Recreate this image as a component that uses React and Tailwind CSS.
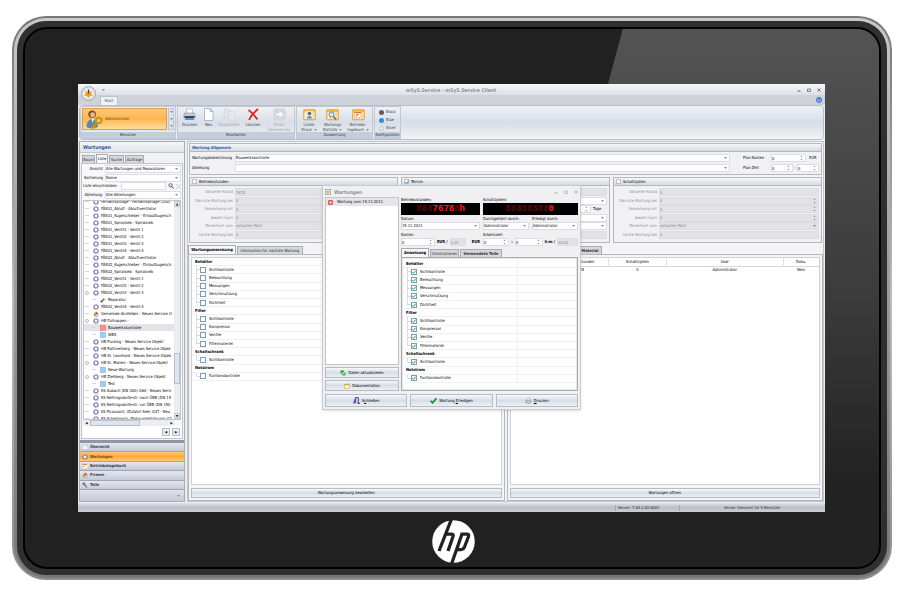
import { Fragment } from 'react';

const PANEL = 'border border-[#b4b7bd] bg-[#f1f1f4]';
const FIELD = 'border border-[#dcdde2] rounded-none';
const BUTTON =
  'flex items-center justify-center gap-[2px] border border-[#b3bcc8] bg-linear-to-b from-[#f7f9fb] via-[#d5dde6] to-[#edf1f5]';

const TREE = [
  { label: 'Fernwirkanlage - Fernwirkanlage (200)', icon: 'ring' },
  { label: 'FÄKU1_Abluft - Abluftventilator', icon: 'ring' },
  { label: 'FÄKU1_Kugelschieber - Einlaufkugelsch', icon: 'ring' },
  { label: 'FÄKU1_Spiralsieb - Spiralsieb', icon: 'ring' },
  { label: 'FÄKU1_Ventil1 - Ventil 1', icon: 'ring' },
  { label: 'FÄKU1_Ventil2 - Ventil 2', icon: 'ring' },
  { label: 'FÄKU1_Ventil3 - Ventil 3', icon: 'ring' },
  { label: 'FÄKU1_Ventil4 - Ventil 4', icon: 'ring' },
  { label: 'FÄKU2_Abluft - Abluftventilator', icon: 'ring' },
  { label: 'FÄKU2_Kugelschieber - Einlaufkugelsch', icon: 'ring' },
  { label: 'FÄKU2_Spiralsieb - Spiralsieb', icon: 'ring' },
  { label: 'FÄKU2_Ventil1 - Ventil 1', icon: 'ring' },
  { label: 'FÄKU2_Ventil2 - Ventil 2', icon: 'ring' },
  { label: 'FÄKU2_Ventil3 - Ventil 3', icon: 'ring', open: true },
  { label: 'Reparatur', icon: 'tool', child: true },
  { label: 'FÄKU2_Ventil4 - Ventil 4', icon: 'ring' },
  { label: 'Gemeinde Ansfelden - Neues Service O', icon: 'house' },
  { label: 'HB Fürhappen -', icon: 'ring', open: true },
  { label: 'Bauwerkskontrolle', icon: 'red', child: true, active: true },
  { label: 'WBS', icon: 'blue', child: true },
  { label: 'HB Pucking - Neues Service Objekt', icon: 'ring' },
  { label: 'HB Rathnerberg - Neues Service Objek', icon: 'ring' },
  { label: 'HB St. Leonhard - Neues Service Objek', icon: 'ring' },
  { label: 'HB St. Marien - Neues Service Objekt', icon: 'ring', open: true },
  { label: 'Neue Wartung', icon: 'blue', child: true },
  { label: 'HB Ziehberg - Neues Service Objekt', icon: 'ring', open: true },
  { label: 'Test', icon: 'blue', child: true },
  { label: 'KS Aubach (DN 300) G60 - Neues Servi', icon: 'ring' },
  { label: 'KS Nettingsdorferstr. nach ÖBB (DN 15', icon: 'ring' },
  { label: 'KS Nettingsdorferstr. vor ÖBB (DN 150', icon: 'ring' },
  { label: 'KS Picassostr. (Zufahrt See) G47 - Neu', icon: 'ring' },
  { label: 'KS Schellingstr. (Bahnunterführung) G2', icon: 'ring' },
];

const CHECKS = [
  ['Behälter', ['Sichtkontrolle', 'Beleuchtung', 'Messungen', 'Verschmutzung', 'Dichtheit']],
  ['Filter', ['Sichtkontrolle', 'Kompressor', 'Ventile', 'Filtermateriel']],
  ['Schaltschrank', ['Sichtkontrolle']],
  ['Notstrom', ['Funtionskontrolle']],
];

const NAV = [
  ['Übersicht', 'list'],
  ['Wartungen', 'ring'],
  ['Betriebstagebuch', 'book'],
  ['Firmen', 'house'],
  ['Teile', 'wrench'],
];

function SmallIcon({ name, className = 'size-[6px]' }) {
  const shapes = {
    ring: (
      <>
        <circle cx="6" cy="6" r="4" fill="#fff" stroke="#7c7cc4" strokeWidth="2.4" />
        <circle cx="6" cy="6" r="5.4" fill="none" stroke="#6a6ab0" strokeWidth="1" strokeDasharray="2 2.2" />
      </>
    ),
    tool: (
      <>
        <path d="M2 10 L7 5" stroke="#5b3a36" strokeWidth="2.4" />
        <path d="M7 2 L10 5 L8 6 L6 4z" fill="#d33b2c" />
        <path d="M1 9 L3 11" stroke="#d33b2c" strokeWidth="2" />
      </>
    ),
    house: (
      <>
        <path d="M1 6 L6 1 L9 4 L6 11 L2 10z" fill="#ef8a2e" />
        <path d="M6 1 L11 6 L9 6 L6 4z" fill="#b5431f" />
        <path d="M5 7h5v4H5z" fill="#dfe8f3" stroke="#6f92bd" />
      </>
    ),
    red: <rect x="1" y="1" width="10" height="10" fill="#ff8d8d" stroke="#e35d5d" />,
    blue: <rect x="1" y="1" width="10" height="10" fill="#9fcbf5" stroke="#6aa5dd" />,
    redbox: <rect x="2" y="2" width="8" height="8" fill="#fff" stroke="#e81e25" strokeWidth="2.6" />,
    list: (
      <>
        <rect x="0.5" y="2" width="11" height="9" fill="#fff" stroke="#aab6c8" />
        <path d="M1 4h10M5 4v7" stroke="#b9cbe4" />
      </>
    ),
    book: (
      <>
        <rect x="1" y="1" width="10" height="10" fill="#fff" stroke="#d6cdc0" />
        <path d="M1 3h9" stroke="#ef8434" strokeWidth="2.5" />
        <path d="M3 7h3" stroke="#db5a3d" strokeWidth="1.5" />
      </>
    ),
    wrench: (
      <>
        <path d="M3 3 L10 11" stroke="#545b66" strokeWidth="2.2" />
        <circle cx="3.5" cy="3.5" r="2.2" fill="none" stroke="#545b66" strokeWidth="1.5" />
      </>
    ),
    search: (
      <>
        <circle cx="5" cy="4.5" r="3.3" fill="#dfe6ee" stroke="#3f4650" strokeWidth="1.5" />
        <path d="M7.5 7 L11 11" stroke="#2f3540" strokeWidth="2" />
      </>
    ),
    clear: <path d="M1 3V1h2M9 1h2v2M11 9v2H9M3 11H1V9M3 3l6 6M9 3l-6 6" fill="none" stroke="#848b96" />,
    refresh: (
      <>
        <path d="M1 1h7v3H5v3H1z" fill="#28a52c" />
        <path d="M11 11H4V8h3V5h4z" fill="#48c24a" />
      </>
    ),
    folder: (
      <>
        <rect x="1" y="3" width="10" height="8" fill="#fff6d2" stroke="#c9a442" />
        <path d="M1 3h7" stroke="#e0a51c" strokeWidth="2.5" />
        <path d="M9 1v4" stroke="#3a6db7" />
      </>
    ),
    door: (
      <>
        <path d="M4 11V1h5v10" fill="#c9d9ef" stroke="#273d8c" strokeWidth="1.6" />
        <path d="M1 11l3-7M8 11h4" stroke="#7a2fa0" strokeWidth="2" />
      </>
    ),
    tick: <path d="M1 6.5 L4.5 10 L11 2" fill="none" stroke="#12832a" strokeWidth="2.6" />,
    printer: (
      <>
        <path d="M3 5 L5 1 L9 2 L8 6" fill="#fff" stroke="#98a4b3" />
        <path d="M1 6l8-1 2 3-3 3-6-1z" fill="#c3cad4" stroke="#7d8894" />
      </>
    ),
    app: (
      <>
        <rect x="0.5" y="0.5" width="11" height="11" fill="#e8f0fa" stroke="#5e86b8" />
        <path d="M6 2l1.4 2.6L10 5 8 7l.4 3L6 8.6l-2.4 1.4L4 7 2 5l2.6-.4z" fill="#f0a21c" />
      </>
    ),
  };
  return (
    <svg viewBox="0 0 12 12" className={`shrink-0 ${className}`} aria-hidden="true">
      {shapes[name]}
    </svg>
  );
}

function RibbonIcon({ name }) {
  const table = (
    <>
      <rect x="1" y="3" width="24" height="21" rx="2" fill="#f6b846" stroke="#d99523" />
      <path d="M3 8h20v14H3z" fill="#fff3cf" />
      <path d="M9 8v14M15 8v14M20 8v14" stroke="#f0b54c" strokeWidth="1.5" />
    </>
  );
  const shapes = {
    print: (
      <>
        <path d="M7 2h12v9H7z" fill="#fff" stroke="#8b99ad" />
        <path d="M3 10h20l2 9H1z" fill="#c4ccd8" stroke="#77849a" />
        <path d="M3 16h20v4H3z" fill="#3c4350" />
        <path d="M5 20h16l2 4H3z" fill="#4a9be8" />
      </>
    ),
    page: (
      <>
        <path d="M5 1h11l6 6v18H5z" fill="#fff" stroke="#8ea0bd" strokeWidth="1.4" />
        <path d="M16 1v6h6z" fill="#b9cdea" stroke="#8ea0bd" />
      </>
    ),
    copy: (
      <>
        <path d="M2 2h9l3 3v14H2z" fill="#e3e6ea" stroke="#c2c7ce" />
        <path d="M11 7h9l4 4v13H11z" fill="#e9ebee" stroke="#c2c7ce" />
        <path d="M13 14h8M13 18h8" stroke="#c9cdd3" />
      </>
    ),
    del: <path d="M3 4c6 4 13 12 18 19M22 2C15 8 8 15 4 24" fill="none" stroke="#db2a1c" strokeWidth="3.6" />,
    arrow: (
      <>
        <rect x="1" y="1" width="24" height="24" rx="3" fill="#d3d6da" />
        <path d="M6 11h7V6l8 7-8 7v-5H6z" fill="#f7f8f9" />
      </>
    ),
    user: (
      <>
        {table}
        <path d="M6 6h14v15H6z" fill="#d8ebfb" />
        <circle cx="13" cy="11" r="3.5" fill="#8a5a2c" />
        <path d="M8 21c0-7 10-7 10 0z" fill="#4d93d8" />
      </>
    ),
    stat: (
      <>
        {table}
        <circle cx="11" cy="13" r="5" fill="#cfe6f7" stroke="#5c7f9e" strokeWidth="1.8" />
        <path d="M15 17l5 6" stroke="#5b6470" strokeWidth="2.5" />
      </>
    ),
    diary: (
      <>
        {table}
        <rect x="5" y="7" width="13" height="12" fill="#fff" stroke="#d2a184" />
        <path d="M5 9h13M8 16l5-4" stroke="#ea6a35" strokeWidth="2.5" />
      </>
    ),
  };
  return (
    <svg viewBox="0 0 26 26" className="size-[13px] shrink-0" aria-hidden="true">
      {shapes[name]}
    </svg>
  );
}

function RibbonButton({ icon, lines, width, muted, menu }) {
  return (
    <button className={`flex flex-col items-center leading-[5px] ${width} ${muted ? 'text-[#a0a5ae]' : 'text-[#353d4b]'}`}>
      <RibbonIcon name={icon} />
      <span className="mt-px whitespace-nowrap">
        {lines.map((line, i) => (
          <span key={line} className="flex items-center justify-center gap-[2px]">
            {line}
            {menu && i === lines.length - 1 && <Caret />}
          </span>
        ))}
      </span>
    </button>
  );
}

function RibbonGroup({ title, width, children }) {
  return (
    <section
      className={`flex flex-col border border-[#c3c9d3] bg-linear-to-b from-[#eff1f5] via-[#d9dee8] to-[#eceff3] ${width}`}
    >
      <div className="flex min-h-0 flex-1 justify-center pt-px">{children}</div>
      <h3 className="h-[6px] bg-[#c5ccdb] text-center whitespace-nowrap text-[#2c3648]">{title}</h3>
    </section>
  );
}

function Arrows() {
  return (
    <svg viewBox="0 0 6 12" className="h-[6px] w-[3px] shrink-0" aria-hidden="true">
      <path d="M1 4l2-3 2 3zM1 8l2 3 2-3z" fill="#8b9098" />
    </svg>
  );
}

function Caret() {
  return (
    <svg viewBox="0 0 6 4" className="h-[2px] w-[3px] shrink-0" aria-hidden="true">
      <path d="M0 0h6L3 4z" fill="#8b9098" />
    </svg>
  );
}

function Field({ id, label, value = '', kind = 'text', off, className = 'flex-1' }) {
  const tone = off ? 'bg-[#e1e1e6] text-[#8f9097]' : 'bg-white';
  return (
    <span className={`flex h-[8px] min-w-0 items-center pr-[2px] ${FIELD} ${tone} ${className}`}>
      {kind === 'select' ? (
        <select id={id} aria-label={label} disabled={off} className="h-full min-w-0 flex-1 appearance-none opacity-100">
          <option>{value}</option>
        </select>
      ) : (
        <input id={id} aria-label={label} disabled={off} defaultValue={value} className="h-full w-0 min-w-0 flex-1" />
      )}
      {kind === 'select' && <Caret />}
      {kind === 'spin' && <Arrows />}
    </span>
  );
}

function TabBar({ tabs, active }) {
  return (
    <div role="tablist" className="flex items-end gap-px">
      {tabs.map(([name, width, bold]) => (
        <button
          key={name}
          role="tab"
          aria-selected={name === active}
          className={`border border-b-0 border-[#a8abb2] whitespace-nowrap ${width} ${
            name === active ? 'h-[9px] bg-[#f8f8fa] leading-[8px]' : 'h-[8px] bg-[#d6d7dc] leading-[7px] text-[#2b2d33]'
          } ${bold ? 'font-bold' : ''}`}
        >
          {name}
        </button>
      ))}
    </div>
  );
}

function CheckTree({ prefix, checked, split }) {
  return (
    <div className="flex h-[123px] flex-col">
      {CHECKS.map(([group, items]) => (
        <Fragment key={group}>
          <div className="flex flex-1 items-center border-b border-[#f1f1f4]">
            <h4 className={`flex items-center self-stretch pl-[3px] font-bold ${split ? 'w-[115px] border-r border-[#f1f1f4]' : ''}`}>
              {group}
            </h4>
          </div>
          {items.map((item, i) => (
            <div key={item} className="flex flex-1 items-center border-b border-[#f1f1f4]">
              <div className={`flex items-center self-stretch pl-[4px] ${split ? 'w-[115px] border-r border-[#f1f1f4]' : ''}`}>
                <span className={`w-px bg-[#d5d7dc] ${i === items.length - 1 ? 'h-1/2 self-start' : 'self-stretch'}`} />
                <span className="h-px w-[3px] bg-[#d5d7dc]" />
                <input
                  type="checkbox"
                  id={`${prefix}-${group}-${i}`}
                  defaultChecked={checked}
                  className="size-[6px] appearance-none border border-[#7b9dbf] bg-white"
                />
                {checked && (
                  <span className="pointer-events-none -ml-[5px] flex w-[5px]">
                    <SmallIcon name="tick" className="size-[4px]" />
                  </span>
                )}
                <label htmlFor={`${prefix}-${group}-${i}`} className="pl-[3px]">
                  {item}
                </label>
              </div>
            </div>
          ))}
        </Fragment>
      ))}
    </div>
  );
}

function Counter({ id, title, rows, checked }) {
  return (
    <fieldset className={`flex min-w-0 flex-1 flex-col ${PANEL}`}>
      <div className="flex h-[8px] items-center gap-[2px] border-b border-[#b4b7bd] bg-linear-to-b from-[#f5f6f8] to-[#d5dce4] pl-[2px]">
        <input
          type="checkbox"
          id={id}
          defaultChecked={checked}
          className="peer size-[5px] appearance-none border border-[#b9bec8] bg-white"
        />
        {checked && (
          <span className="pointer-events-none -ml-[6px] flex w-[4px]">
            <svg viewBox="0 0 12 12" className="size-[4px]" aria-hidden="true">
              <path d="M1 6.5 L4.500 10 L11 2" fill="none" stroke="#2f6fb8" strokeWidth="2.6" />
            </svg>
          </span>
        )}
        <label htmlFor={id}>{title}</label>
      </div>
      <div className="flex flex-1 flex-col justify-between pt-[2px] pr-[2px] pb-[3px]">
        {rows.map(([label, value, kind, on, unit]) => (
          <div key={label} className="flex items-center">
            <label htmlFor={`${id}-${label}`} className={`w-[43px] shrink-0 text-right whitespace-nowrap ${on ? '' : 'text-[#8f9097]'}`}>
              {label}
            </label>
            <Field id={`${id}-${label}`} value={value} kind={kind} off={!on} className="ml-[2px] flex-1" />
            {unit && <span className="w-[16px] pl-[2px]">{unit}</span>}
          </div>
        ))}
      </div>
    </fieldset>
  );
}

const counterRows = (state) => [
  ['Aktueller Stand', state],
  ['Nächste Wartung bei', '0', 'spin'],
  ['Vorwarnung mit', '0', 'spin'],
  ['Jeweils nach', '0', 'spin'],
  ['Berechnet vom', 'aktuellen Wert', 'select'],
  ['Letzte Wartung bei', '0'],
];

const TERMIN_ROWS = [
  ['Aktueller Stand', ''],
  ['Nächste Wartung am', '', 'select', true],
  ['Vorwarnung mit', '', 'spin', true, 'Tage'],
  ['Jeweils nach', '', 'select', true],
  ['Berechnet vom', '', 'select', true],
  ['Letzte Wartung am', ''],
];

// parts: [text, lit] pairs, left to right
function Led({ parts, className }) {
  return (
    <output
      className={`flex h-[12px] items-center justify-end bg-black font-['Liberation_Mono',monospace] text-[9px] leading-[10px] font-bold whitespace-pre ${className}`}
    >
      {parts.map(([text, lit], i) => (
        <span key={i} className={lit ? 'text-[#ff1a14]' : 'text-[#5a0b09]'}>
          {text}
        </span>
      ))}
    </output>
  );
}

function WindowButtons({ className }) {
  return (
    <div className={`flex items-center ${className}`}>
      <button aria-label="Minimieren">
        <svg viewBox="0 0 8 8" className="size-[4px]">
          <path d="M1 6h6" stroke="currentColor" strokeWidth="2" />
        </svg>
      </button>
      <button aria-label="Maximieren">
        <svg viewBox="0 0 8 8" className="size-[4px]">
          <path d="M1 2h6v5H1z" fill="none" stroke="currentColor" strokeWidth="1.5" />
        </svg>
      </button>
      <button aria-label="Fenster zu">
        <svg viewBox="0 0 8 8" className="size-[4px]">
          <path d="M1 1l6 6M7 1L1 7" stroke="currentColor" strokeWidth="1.8" />
        </svg>
      </button>
    </div>
  );
}

function Dialog() {
  return (
    <div
      role="dialog"
      aria-label="Wartungen"
      className="absolute top-[101px] left-[244px] flex h-[225px] w-[259px] flex-col border border-[#c9cbd0] bg-[#f0f0f3] px-[2px] pb-[2px] shadow-sm"
    >
      <header className="flex h-[11px] items-center gap-[3px] text-[#8d9097]">
        <SmallIcon name="app" />
        <h2 className="flex-1 text-[5px] leading-[8px] font-bold">Wartungen</h2>
        <WindowButtons className="gap-[6px] text-[#a9adb4]" />
      </header>
      <div className="flex min-h-0 flex-1 gap-[2px]">
        <div className="flex w-[74px] flex-col gap-[2px]">
          <ul className="flex-1 border border-[#c3c5ca] bg-white">
            <li className="flex h-[8px] items-center gap-[4px] bg-[#e6e6ea] pl-[2px]">
              <SmallIcon name="redbox" className="size-[5px]" />
              Wartung vom 15.11.2011
            </li>
          </ul>
          <button className={`h-[11px] ${BUTTON}`}>
            <SmallIcon name="refresh" />
            Daten aktualisieren
          </button>
          <button className={`h-[11px] ${BUTTON}`}>
            <SmallIcon name="folder" />
            Dokumentation
          </button>
        </div>

        <div className="flex min-w-0 flex-1 flex-col">
          <div className="flex gap-[3px]">
            <div className="w-[79px]">
              <p>Betriebsstunden:</p>
              <Led parts={[['888'], ['7678', true], ['8'], ['h', true]]} className="pr-[15px]" />
            </div>
            <div className="flex-1">
              <p>Schaltzyklen:</p>
              <Led parts={[['88888888'], ['0', true]]} className="pr-[24px]" />
            </div>
          </div>
          <div className="mt-px flex gap-[3px]">
            <div className="w-[79px]">
              <label htmlFor="datum" className="block">Datum:</label>
              <Field id="datum" value="15.11.2011" kind="select" className="" />
            </div>
            <div className="min-w-0 flex-1">
              <label htmlFor="durch" className="block">Durchgeführt durch:</label>
              <Field id="durch" value="Administrator" kind="select" className="" />
            </div>
            <div className="min-w-0 flex-1">
              <label htmlFor="erledigt" className="block">Erledigt durch:</label>
              <Field id="erledigt" value="Administrator" kind="select" className="" />
            </div>
          </div>
          <div className="mt-[2px] flex gap-[3px]">
            <div className="w-[79px]">
              <label htmlFor="kosten" className="block">Kosten:</label>
              <div className="flex items-center font-bold whitespace-nowrap">
                <Field id="kosten" value="0" kind="spin" className="w-[34px] font-normal" />
                <span className="flex-1 text-center">EUR /</span>
                <Field label="Kosten pro Stunde" value="0,00" off className="w-[16px] font-normal" />
                <span className="flex-1 text-right">EUR</span>
              </div>
            </div>
            <div className="flex-1">
              <label htmlFor="zeit" className="block">Arbeitszeit:</label>
              <div className="flex items-center font-bold whitespace-nowrap">
                <Field id="zeit" value="0" kind="spin" className="w-[26px] font-normal" />
                <span className="w-[6px] text-center">:</span>
                <Field label="Minuten" value="0" kind="spin" className="w-[28px] font-normal" />
                <span className="flex-1 text-center">h:m /</span>
                <Field label="Arbeitszeit gesamt" value="00:00" off className="w-[21px] font-normal" />
              </div>
            </div>
          </div>
          <div className="mt-[2px]">
            <TabBar
              active="Anweisung"
              tabs={[['Anweisung', 'w-[28px]', true], ['Informationen', 'w-[29px]'], ['Verwendete Teile', 'w-[42px]', true]]}
            />
          </div>
          <div className="flex-1 border border-[#a8abb2] bg-[#e6e7ea] p-px">
            <div className="h-full bg-white pt-px">
              <CheckTree prefix="dlg" checked split />
            </div>
          </div>
        </div>
      </div>
      <footer className="mt-[3px] flex gap-[3px]">
        <button className={`h-[13px] flex-1 ${BUTTON}`}>
          <SmallIcon name="door" className="size-[7px]" />
          <span>S<u>c</u>hließen</span>
        </button>
        <button className={`h-[13px] flex-1 ${BUTTON}`}>
          <SmallIcon name="tick" className="size-[7px]" />
          <span>Wartung <u>E</u>rledigen</span>
        </button>
        <button className={`h-[13px] flex-1 ${BUTTON}`}>
          <SmallIcon name="printer" className="size-[7px]" />
          <span><u>D</u>rucken</span>
        </button>
      </footer>
    </div>
  );
}

function Ribbon() {
  return (
    <div className="mx-px flex h-[35px] gap-px rounded-sm border border-[#b9bfc9] bg-linear-to-b from-[#eff1f5] via-[#d7dde8] to-[#f2f4f4]">
      <RibbonGroup title="Benutzer" width="w-[96px]">
        <div className="mb-[2px] flex flex-1 gap-px px-px">
          <button className="flex flex-1 items-center gap-[2px] border border-[#e0a040] bg-linear-to-b from-[#fbc877] via-[#fdb64d] to-[#ffdf9a] text-[#5b3d14]">
            <svg viewBox="0 0 36 40" className="ml-[3px] h-[19px] w-[17px]" aria-hidden="true">
              <circle cx="13" cy="9" r="8" fill="#7b4f30" />
              <path d="M9 9c0-6 10-6 10 0 0 9-10 9-10 0" fill="#e7b98c" />
              <path d="M1 36c0-22 24-22 24 0-6 4-18 4-24 0" fill="#5f84ad" />
              <path d="M12 19l2 8 3-8z" fill="#fff" />
              <circle cx="27" cy="22" r="6" fill="none" stroke="#c99412" strokeWidth="4" />
              <path d="M22 27L12 38M16 34l4 4" stroke="#c99412" strokeWidth="4" />
            </svg>
            Administrator
          </button>
          <div className="flex w-[6px] flex-col items-center justify-around border border-[#c0c7d2] bg-[#dde2ea]">
            <Caret />
            <Caret />
            <Caret />
          </div>
        </div>
      </RibbonGroup>
      <RibbonGroup title="Bearbeiten" width="w-[118px]">
        <RibbonButton icon="print" lines={['Drucken']} width="w-[21px]" />
        <RibbonButton icon="page" lines={['Neu']} width="w-[17px]" />
        <RibbonButton icon="copy" lines={['Duplizieren']} width="w-[24px]" muted />
        <RibbonButton icon="del" lines={['Löschen']} width="w-[24px]" />
        <RibbonButton icon="arrow" lines={['Daten', 'Übernehmen']} width="w-[28px]" muted />
      </RibbonGroup>
      <RibbonGroup title="Auswertung" width="w-[77px]">
        <RibbonButton icon="user" lines={['Listen', 'Druck']} width="w-[23px]" menu />
        <RibbonButton icon="stat" lines={['Wartungs', 'Statistik']} width="w-[24px]" menu />
        <RibbonButton icon="diary" lines={['Betriebs-', 'tagebuch']} width="w-[27px]" menu />
      </RibbonGroup>
      <RibbonGroup title="Konfiguration" width="w-[27px]">
        <div className="flex flex-col justify-around text-[#353d4b]">
          <button className="flex items-center gap-[2px]"><span className="size-[5px] rounded-full bg-[#5d6066]" />Black</button>
          <button className="flex items-center gap-[2px]"><span className="size-[5px] rounded-full bg-[#2a93d8]" />Blue</button>
          <button className="flex items-center gap-[2px]"><span className="size-[5px] rounded-full border border-[#c3c6cb] bg-[#eceef0]" />Silver</button>
        </div>
      </RibbonGroup>
    </div>
  );
}

function Sidebar() {
  return (
    <aside className="flex w-[106px] flex-col border border-[#a9adb6] bg-[#f1f1f4]">
      <h2 className="h-[11px] border-b border-[#c3c7cf] bg-linear-to-b from-[#f4f5f8] to-[#dfe3ea] pl-[3px] text-[5px] leading-[10px] font-bold text-[#2b5ba3]">
        Wartungen
      </h2>
      <div className="mt-px pl-[2px]">
        <TabBar active="Liste" tabs={[['Baum', 'w-[13px]'], ['Liste', 'w-[12px]'], ['Suche', 'w-[15px]'], ['Aufträge', 'w-[19px]']]} />
      </div>
      <div className="mx-px flex min-h-0 flex-1 flex-col border border-[#c3c5ca] bg-[#f8f8fa] px-px pt-px">
        <div className="flex h-[8px] items-center gap-[2px]">
          <label htmlFor="ansicht" className="w-[20px] text-right">Ansicht</label>
          <Field id="ansicht" value="Alle Wartungen und Reparaturen" kind="select" />
        </div>
        <div className="mt-px flex h-[8px] items-center gap-[2px]">
          <label htmlFor="sortierung" className="w-[20px] text-right">Sortierung</label>
          <Field id="sortierung" value="Name" kind="select" />
        </div>
        <div className="flex h-[8px] items-center gap-[2px]">
          <label htmlFor="filter" className="w-[36px] whitespace-nowrap">Liste einschränken</label>
          <Field id="filter" />
          <SmallIcon name="search" />
          <SmallIcon name="clear" className="size-[5px]" />
        </div>
        <div className="mt-px flex h-[8px] items-center gap-[2px]">
          <label htmlFor="abteilungen" className="w-[20px] text-right">Abteilung:</label>
          <Field id="abteilungen" value="Alle Abteilungen" kind="select" />
        </div>
        <div className="mt-px flex min-h-0 flex-1 border border-[#c3c5ca] bg-white">
          <ul className="flex min-w-0 flex-1 flex-col justify-center overflow-hidden">
            {TREE.map((node) => (
              <li
                key={node.label}
                className={`flex h-[7px] shrink-0 items-center leading-[7px] whitespace-nowrap ${node.child ? 'pl-[8px]' : 'pl-px'} ${
                  node.active ? 'bg-[#e4e4e8]' : ''
                }`}
              >
                {node.open ? (
                  <span className="size-[4px] shrink-0 rounded-full border border-[#b9bdc6]" />
                ) : (
                  <span className="h-px w-[4px] shrink-0 bg-[#d5d7dc]" />
                )}
                <SmallIcon name={node.icon} className="ml-[4px] size-[6px]" />
                <span className="ml-[2px]">{node.label}</span>
              </li>
            ))}
          </ul>
          <div className="flex w-[6px] flex-col items-center bg-[#ececf1]">
            <span className="flex h-[6px] w-full items-center justify-center border border-[#c5cad6] bg-[#dfe3ee] text-[3px] leading-none">▲</span>
            <span className="mt-[146px] h-[31px] w-full border border-[#b9bfce] bg-[#e0e4ef]" />
            <span className="mt-auto flex h-[6px] w-full items-center justify-center border border-[#c5cad6] bg-[#dfe3ee] text-[3px] leading-none">▼</span>
          </div>
        </div>
        <div className="mr-[6px] flex h-[6px] items-center bg-[#ececf1]">
          <span className="w-[7px] text-center text-[3px] leading-none">◀</span>
          <span className="h-full w-[50px] border border-[#b9bfce] bg-[#e0e4ef]" />
          <span className="ml-auto w-[7px] text-center text-[3px] leading-none">▶</span>
        </div>
        <div className="flex h-[12px] items-center justify-end gap-[2px] bg-white pr-px">
          <button className={`h-[8px] w-[8px] text-[3px] leading-none ${BUTTON}`} aria-label="Zurück">◀</button>
          <button className={`h-[8px] w-[8px] text-[3px] leading-none ${BUTTON}`} aria-label="Weiter">▶</button>
        </div>
      </div>
      <div className="mt-px h-[3px] bg-[#8f95a8]" />
      <nav className="flex h-[47px] flex-col">
        {NAV.map(([name, icon]) => (
          <a
            key={name}
            href={`#${icon}`}
            className={`flex flex-1 items-center gap-[2px] border-b border-[#9ea4b5] bg-linear-to-b pl-[2px] font-bold ${
              name === 'Wartungen' ? 'from-[#fdc876] via-[#fbab3c] to-[#fecb6b] text-[#7a4c12]' : 'from-[#e6e8ef] to-[#c6cad7] text-[#343b4b]'
            }`}
          >
            <SmallIcon name={icon} />
            {name}
          </a>
        ))}
      </nav>
      <div className="flex h-[11px] items-center justify-end bg-linear-to-b from-[#e0e3ea] to-[#c3c8d5] pr-[4px]">
        <Caret />
      </div>
    </aside>
  );
}

function General() {
  return (
    <section className={`mx-px ${PANEL}`}>
      <h2 className="h-[8px] border-b border-[#b4b7bd] bg-linear-to-b from-[#f5f6f8] to-[#d5dce4] pl-[2px] leading-[7px] font-bold text-[#2b5ba3]">
        Wartung Allgemein
      </h2>
      <div className="flex flex-col gap-[2px] py-[2px] pr-[2px] pl-[2px]">
        <div className="flex items-center">
          <label htmlFor="bezeichnung" className="w-[43px]">Wartungsbezeichnung</label>
          <Field id="bezeichnung" value="Bauwerkskontrolle" kind="select" />
          <label htmlFor="plankosten" className="w-[41px] pl-[13px] whitespace-nowrap">Plan Kosten</label>
          <Field id="plankosten" value="0" kind="spin" className="w-[35px]" />
          <span className="w-[13px] pl-[3px]">EUR</span>
        </div>
        <div className="flex items-center">
          <label htmlFor="abteilung" className="w-[43px]">Abteilung</label>
          <Field id="abteilung" kind="select" />
          <label htmlFor="planzeit" className="w-[41px] pl-[13px] whitespace-nowrap">Plan Zeit</label>
          <Field id="planzeit" value="0" kind="spin" className="w-[22px]" />
          <span className="w-[4px] text-center">:</span>
          <Field label="Plan Zeit Minuten" value="0" kind="spin" className="w-[22px]" />
        </div>
      </div>
    </section>
  );
}

function History() {
  return (
    <table className="w-full table-fixed border-collapse text-center">
      <thead>
        <tr className="h-[8px] border-b border-[#d5d7de]">
          <th className="w-[40px] border-r border-[#e0e1e6] font-normal">Datum</th>
          <th className="w-[58px] border-r border-[#e0e1e6] font-normal">Betriebsstunden</th>
          <th className="w-[58px] border-r border-[#e0e1e6] font-normal">Schaltzyklen</th>
          <th className="border-r border-[#e0e1e6] font-normal">User</th>
          <th className="w-[36px] font-normal">Doku.</th>
        </tr>
      </thead>
      <tbody>
        <tr className="h-[7px]">
          <td>15.11.2011</td>
          <td>7678</td>
          <td>0</td>
          <td>Administrator</td>
          <td>Nein</td>
        </tr>
      </tbody>
    </table>
  );
}

function ServiceClient() {
  return (
    <div className="relative flex min-h-0 flex-1 flex-col bg-[#eceef1] font-['DejaVu_Sans_Condensed','Liberation_Sans',sans-serif] text-[4px] leading-[6px] text-black">
      <header className="flex h-[11px] items-center bg-linear-to-b from-[#f6f7f9] to-[#dce0e6] pr-[4px] pl-[24px]">
        <Caret />
        <h1 className="flex-1 text-center text-[5px] font-bold text-[#8b9099]">mSyS.Service - mSyS.Service Client</h1>
        <WindowButtons className="gap-[6px] text-[#5d6470]" />
      </header>
      <button
        aria-label="Anwendungsmenü"
        className="absolute top-[2px] left-[3px] size-[15px] rounded-full border border-[#a3a8b2] bg-radial from-white to-[#cfd3da]"
      >
        <svg viewBox="0 0 26 26" className="size-full">
          <path d="M13 5l2 5 5-2-2 5 4 4-6 1-3 4-3-4-6-1 4-4-2-5 5 2z" fill="#f2a01b" />
          <path d="M13 5v8" stroke="#39404d" strokeWidth="2.5" />
        </svg>
      </button>
      <div className="flex h-[10px] items-end justify-between bg-[#cdd2db] pr-[3px] pl-[22px]">
        <button className="h-[9px] w-[18px] rounded-t-xs border border-b-0 border-[#b9c3ca] bg-[#eef3f4] text-[#353d4b]">Start</button>
        <span className="mb-[2px] size-[6px] rounded-full border border-[#2f6fd8] bg-[#8fb8f5] text-center leading-[4px] font-bold text-[#1746a8]">
          ?
        </span>
      </div>
      <Ribbon />

      <div className="flex min-h-0 flex-1 gap-[2px] px-px pt-px">
        <Sidebar />
        <main className="flex min-w-0 flex-1 flex-col border border-[#c3c5ca] bg-[#f4f4f7] pt-px">
          <General />
          <div className="mx-px mt-[2px] flex h-[66px] gap-[3px]">
            <Counter id="stunden" title="Betriebsstunden" rows={counterRows('7678')} />
            <Counter id="termin" title="Termin" rows={TERMIN_ROWS} checked />
            <Counter id="zyklen" title="Schaltzyklen" rows={counterRows('0')} />
          </div>
          <div className="mt-[2px] flex min-h-0 flex-1 gap-[2px]">
            <section className="flex min-w-0 flex-1 flex-col">
              <TabBar active="Wartungsanweisung" tabs={[['Wartungsanweisung', 'w-[48px]', true], ['Information für nächste Wartung', 'w-[66px]']]} />
              <div className="flex min-h-0 flex-1 flex-col gap-[3px] border border-[#b4b7bd] p-[2px]">
                <div className="min-h-0 flex-1 border border-[#cfd1d6] bg-white">
                  <CheckTree prefix="plan" />
                </div>
                <button className={`h-[10px] ${BUTTON}`}>Wartungsanweisung bearbeiten</button>
              </div>
            </section>
            <section className="flex min-w-0 flex-1 flex-col">
              <TabBar
                active="Wartungen"
                tabs={[['Wartungen', 'w-[30px]', true], ['Reparaturen', 'w-[40px]', true], ['Material', 'w-[23px]', true]]}
              />
              <div className="flex min-h-0 flex-1 flex-col gap-[3px] border border-[#b4b7bd] p-[2px]">
                <div className="min-h-0 flex-1 border border-[#cfd1d6] bg-white">
                  <History />
                </div>
                <button className={`h-[10px] ${BUTTON}`}>Wartungen öffnen</button>
              </div>
            </section>
          </div>
        </main>
      </div>

      <footer className="mt-px flex h-[9px] items-center bg-linear-to-b from-[#dfe2e6] via-[#bcc1c8] to-[#c9cdd2] text-[#2d3138]">
        <span className="flex-1" />
        <span className="w-[64px] border-l border-[#a4a9b1] pl-[2px]">Server: 7.84.2.82:6001</span>
        <span className="w-[146px] border-l border-[#a4a9b1] text-center">Server lizensiert für 5 Benutzer.</span>
      </footer>
      <Dialog />
    </div>
  );
}

function HpLogo() {
  return (
    <svg viewBox="0 0 86 86" className="size-[43px]" role="img" aria-label="hp">
      <circle cx="43" cy="43" r="42.5" fill="#fff" />
      <g fill="none" stroke="#222" strokeWidth="6.5">
        <path d="M39 -2L14 62" />
        <path d="M27 28h11q6 0 4 5L32 62" />
        <path d="M60 28L39 88" />
        <path d="M57 28h12q6 0 4 5l-8 21q-2 5-7 5H48" />
      </g>
    </svg>
  );
}

export default function App() {
  return (
    <div className="flex h-screen min-h-[500px] flex-col bg-white pt-4 pr-2 pb-4 pl-3">
      <div className="flex min-h-0 flex-1 rounded-[34px] bg-linear-to-b from-[#777] via-[#bdbdbd] to-[#8f8f8f] p-[2px]">
        <div className="flex min-h-0 flex-1 rounded-[32px] bg-linear-to-b from-[#c9c9c9] via-[#9a9a9a] to-[#777] p-[3px]">
          <div className="flex min-h-0 flex-1 rounded-[29px] bg-[#303030] p-[6px]">
            <div className="relative flex min-h-0 flex-1 flex-col overflow-hidden rounded-[24px] border-2 border-black bg-[#212121] pt-[55px] pr-[54px] pl-[53px]">
              <div className="absolute inset-0 bg-linear-to-b from-[#545454] via-[#3b3b3b] via-50% to-[#222] to-85% [clip-path:polygon(70%_0,100%_0,100%_100%,53%_100%)]" />
              <ServiceClient />
              <div className="relative flex h-[55px] items-center justify-center pt-1 pl-1">
                <HpLogo />
              </div>
            </div>
          </div>
        </div>
      </div>
    </div>
  );
}
